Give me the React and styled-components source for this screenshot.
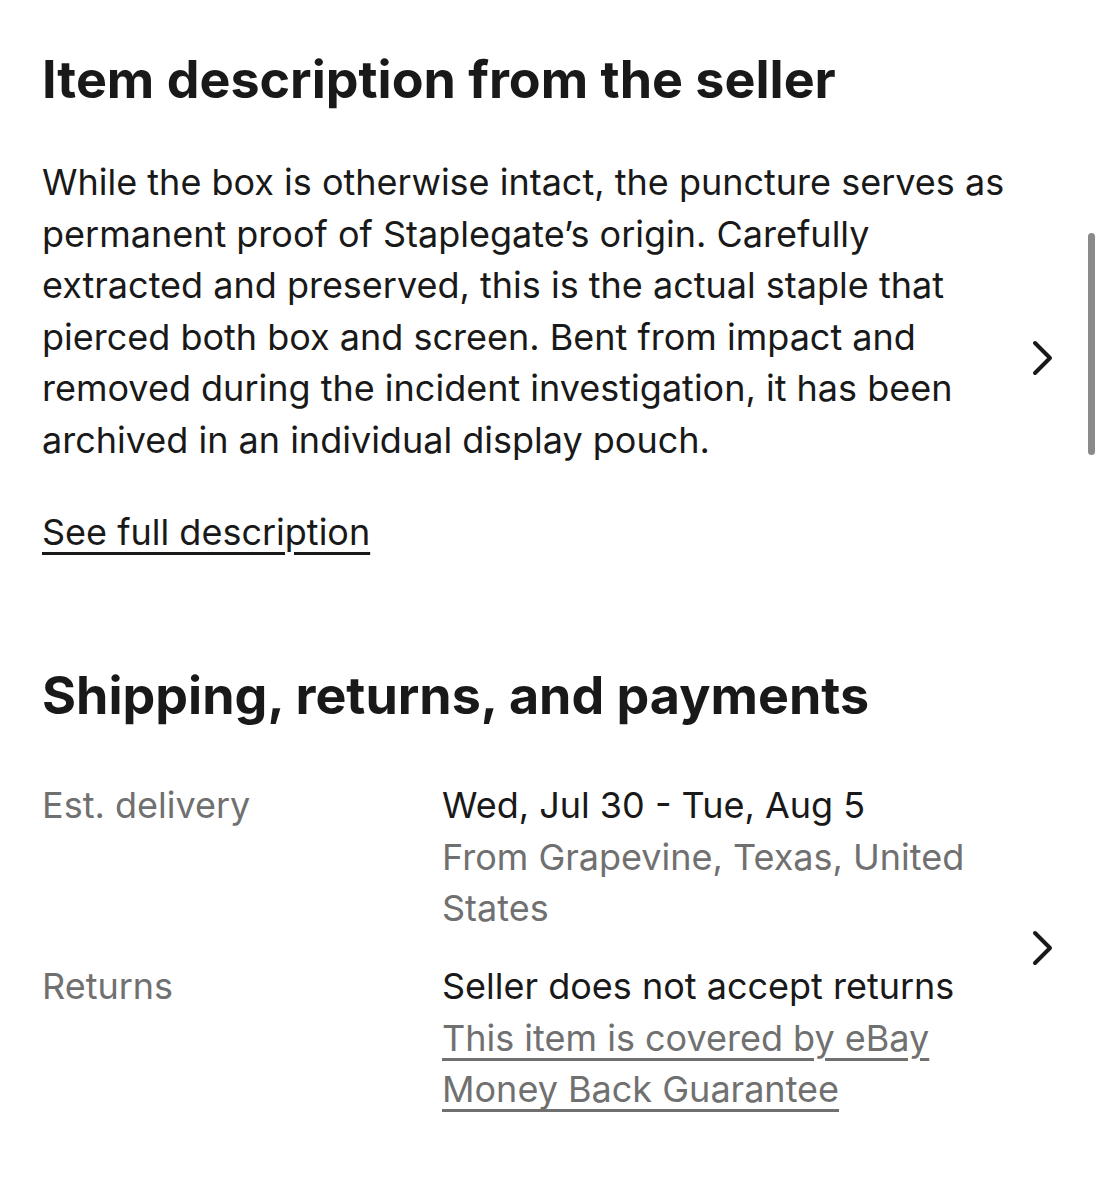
import React from "react";
import styled, { createGlobalStyle } from "styled-components";

const Global = createGlobalStyle`
  html, body { margin: 0; padding: 0; background: #fff; }
  body { font-family: Inter, "Liberation Sans", sans-serif; color: #191919; }
`;

function Chevron() {
  return (
    <svg width="22" height="36" viewBox="0 0 22 36" fill="none">
      <path d="M3 3 L18 18 L3 33" stroke="#191919" strokeWidth="4" strokeLinecap="round" strokeLinejoin="round" />
    </svg>
  );
}

const rows = [
  {
    label: "Est. delivery",
    main: "Wed, Jul 30 - Tue, Aug 5",
    sub: "From Grapevine, Texas, United States",
  },
  {
    label: "Returns",
    main: "Seller does not accept returns",
    link: "This item is covered by eBay Money Back Guarantee",
  },
];

export default function App() {
  return (
    <Page>
      <Global />
      <Section>
        <Heading $gap={45}>Item description from the seller</Heading>
        <Row>
          <Column>
            <Body>
              While the box is otherwise intact, the puncture serves as permanent proof of
              Staplegate’s origin. Carefully extracted and preserved, this is the actual staple
              that pierced both box and screen. Bent from impact and removed during the incident
              investigation, it has been archived in an individual display pouch.
            </Body>
            <FullLink>See full description</FullLink>
          </Column>
          <Arrow><Chevron /></Arrow>
        </Row>
      </Section>
      <Section>
        <Heading $gap={52}>Shipping, returns, and payments</Heading>
        <Row>
          <Table>
            {rows.map((r) => (
              <React.Fragment key={r.label}>
                <Label>{r.label}</Label>
                <Value>
                  <Main>{r.main}</Main>
                  {r.sub && <Sub>{r.sub}</Sub>}
                  {r.link && <SubLink>{r.link}</SubLink>}
                </Value>
              </React.Fragment>
            ))}
          </Table>
          <Arrow><Chevron /></Arrow>
        </Row>
      </Section>
      <Scrollbar />
    </Page>
  );
}

const Page = styled.div`
  position: relative;
  width: 1104px;
  height: 1200px;
  overflow: hidden;
  padding: 48px 0 0 42px;
  box-sizing: border-box;
`;

const Section = styled.section`
  display: flex;
  flex-direction: column;
  padding-right: 48px;
  margin-bottom: 106px;
`;

const Heading = styled.h2`
  margin: 0 0 ${(p) => p.$gap}px;
  font-size: 52px;
  font-weight: 700;
  line-height: 64px;
  letter-spacing: 0;
`;

const Row = styled.div`
  display: flex;
  align-items: center;
  justify-content: space-between;
`;

const Column = styled.div`
  display: flex;
  flex-direction: column;
  align-items: flex-start;
`;

const Body = styled.p`
  margin: 0;
  width: 975px;
  font-size: 36px;
  line-height: 51.6px;
`;

const Arrow = styled.div`
  display: flex;
  width: 24px;
  flex-shrink: 0;
`;

const FullLink = styled.a`
  margin-top: 40px;
  font-size: 36px;
  line-height: 51.6px;
  color: #191919;
  text-decoration: underline;
  text-underline-offset: 7px;
  text-decoration-thickness: 2.5px;
`;

const Table = styled.div`
  display: grid;
  grid-template-columns: 400px 560px;
  row-gap: 26px;
  font-size: 36px;
  line-height: 51.6px;
`;

const Label = styled.div`
  color: #707070;
`;

const Value = styled.div`
  display: flex;
  flex-direction: column;
  align-items: flex-start;
`;

const Main = styled.div`
  color: #191919;
`;

const Sub = styled.div`
  color: #707070;
`;

const SubLink = styled.a`
  color: #707070;
  text-decoration: underline;
  text-underline-offset: 7px;
  text-decoration-thickness: 2.5px;
`;

const Scrollbar = styled.div`
  position: absolute;
  right: 9px;
  top: 233px;
  width: 7px;
  height: 222px;
  border-radius: 4px;
  background: #8a8a8a;
`;
